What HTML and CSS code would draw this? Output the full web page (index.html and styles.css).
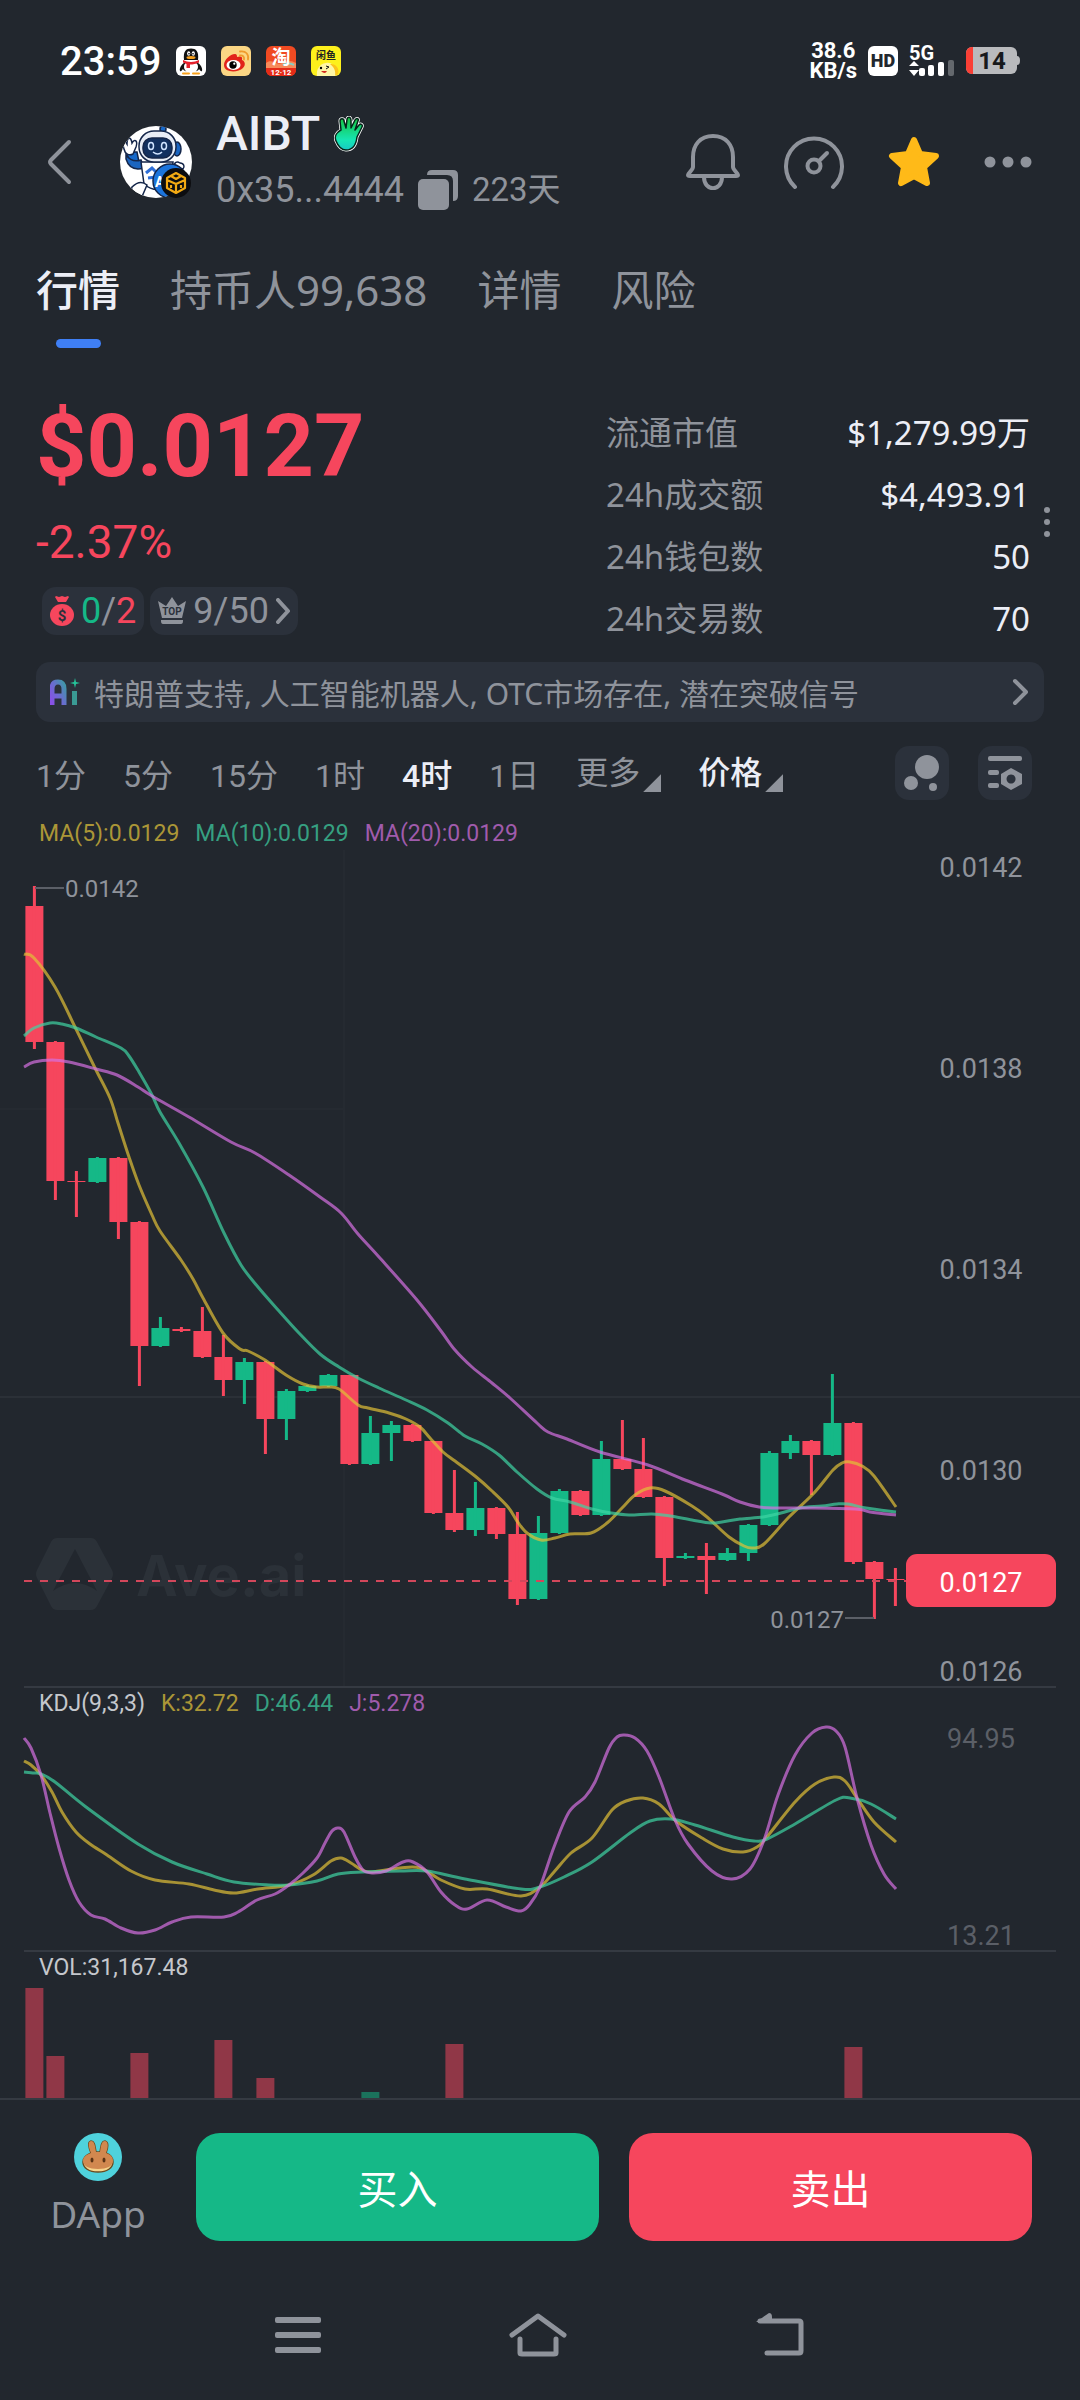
FILE: index.html
```html
<!DOCTYPE html>
<html lang="zh-CN">
<head>
    <meta charset="UTF-8">
    <meta name="viewport" content="width=device-width, initial-scale=1.0">
    <title>AIBT - Ave.ai</title>
    <link rel="stylesheet" href="styles.css">
</head>
<body>
    <div class="status-bar">
        <span class="clock">23:59</span>
        <div class="app-icons">
            <svg viewBox="0 0 30 30" aria-hidden="true">
                <rect width="30" height="30" rx="6" fill="#fff"/>
                <path d="M4 25c-1-3 2-7 4-8h14c2 1 5 5 4 8-1 1-2-1-3-2-1 4-15 4-16 0-1 1-2 3-3 2z" fill="#111"/>
                <ellipse cx="15" cy="21" rx="7" ry="6.500" fill="#fff"/>
                <path d="M8 14C7 5 10 2.500 15 2.500S23 5 22 14z" fill="#111"/>
                <ellipse cx="12.700" cy="7.500" rx="1.600" ry="2.200" fill="#fff"/><ellipse cx="17.300" cy="7.500" rx="1.600" ry="2.200" fill="#fff"/>
                <circle cx="13" cy="7.800" r=".8"/><circle cx="17" cy="7.800" r=".8"/>
                <ellipse cx="15" cy="11.500" rx="4.500" ry="1.500" fill="#f9a11b"/>
                <path d="M7 14c5 2.500 11 2.500 16 0v2.500c-3 1.500-6 2-9 2V22h-3.500v-4L7 16.500z" fill="#e4202c"/>
                <path d="M7 27.500h6M17 27.500h6" stroke="#f9a11b" stroke-width="2" stroke-linecap="round"/>
            </svg>
            <svg viewBox="0 0 30 30" aria-hidden="true">
                <rect width="30" height="30" rx="6" fill="#fbd684"/>
                <path d="M3 19c0-5 6-11 11-11 2 0 2 2 2 3 3-1 6-1 5 3 3 1 4 5 1 8-5 5-19 5-19-3z" fill="#e2231a"/>
                <ellipse cx="12.500" cy="19" rx="7" ry="5" fill="#fff"/>
                <circle cx="12" cy="19" r="3.700"/><circle cx="13.300" cy="17.700" r="1.100" fill="#fff"/>
                <path d="M19 9.500c3-.500 4.500 1.500 4 4M19 5.500c6-1 9 3 8 8" fill="none" stroke="#f09a2c" stroke-width="1.800" stroke-linecap="round"/>
            </svg>
            <svg viewBox="0 0 30 30" aria-hidden="true">
                <rect width="30" height="30" rx="6" fill="#f04a22"/>
                <path d="M0 17c6-5 10 3 16 0s10-2 14 0v5H0z" fill="#f78a5a"/>
                <path d="M17 19q6-3 11 0" stroke="#7fd0c8" stroke-width="2" fill="none"/>
                <text class="glyph" x="15" y="18" font-size="19" text-anchor="middle" fill="#fff">淘</text>
                <path d="M0 22h30v2a6 6 0 0 1-6 6H6a6 6 0 0 1-6-6z" fill="#e52b17"/>
                <text class="glyph" x="15" y="29" font-size="8" text-anchor="middle" fill="#fff">12·12</text>
            </svg>
            <svg viewBox="0 0 30 30" aria-hidden="true">
                <rect width="30" height="30" rx="6" fill="#fdf01c"/>
                <path d="M6 30c-1-6 2-12 9-13 5-1 7 2 11 4 1 3 1 6-1 9z" fill="#fff6a6"/>
                <path d="M19 18c6-1 10 5 8 10l-3 2c1-5-1-9-5-12z" fill="#fcc419"/>
                <text class="glyph" x="15" y="13" font-size="10" text-anchor="middle" fill="#222">闲鱼</text>
                <circle cx="10" cy="22" r="1.200"/><path d="M15 20l3 1-3 2" fill="none" stroke="#111"/>
                <path d="M10 25h6q-2 4-6 0z" fill="#d42a1c"/>
            </svg>
        </div>
        <div class="status-right">
            <span class="net-speed">38.6<br>KB/s</span>
            <span class="hd">HD</span>
            <svg class="signal" viewBox="0 0 46 32" aria-label="5G">
                <text class="glyph" x="0" y="15" font-size="20" fill="#fff">5G</text>
                <g fill="#fff">
                    <path d="M0 21l5-5 5 5zM0 25h10l-5 6z"/>
                    <rect x="10" y="23" width="6" height="8" rx="2"/>
                    <rect x="19" y="20" width="6" height="11" rx="2"/>
                    <rect x="29" y="17" width="6" height="14" rx="2"/>
                    <rect x="39" y="15" width="6" height="16" rx="2" opacity=".3"/>
                </g>
            </svg>
            <svg class="battery" viewBox="0 0 54 28" aria-label="14%">
                <rect x="0" y="0" width="51" height="27" rx="6" fill="#b9babd"/>
                <path d="M51 9q3 0 3 4.500T51 18z" fill="#b9babd"/>
                <path d="M7 0H6a6 6 0 0 0-6 6v15a6 6 0 0 0 6 6h1z" fill="#fa3f35"/>
                <text class="glyph" x="26" y="22" font-size="24" text-anchor="middle" fill="#17191c">14</text>
            </svg>
        </div>
    </div>

    <header class="token-header">
        <button class="icon-btn back" aria-label="返回">
            <svg width="26" height="46" viewBox="0 0 26 46"><path d="M23 3L5 21q-2 2 0 4l18 18" fill="none" stroke="currentColor" stroke-width="4" stroke-linecap="round"/></svg>
        </button>
        <svg class="avatar" viewBox="0 0 74 74" aria-hidden="true">
            <defs><clipPath id="avatar-clip"><circle cx="37" cy="37" r="36"/></clipPath></defs>
            <g clip-path="url(#avatar-clip)" stroke="#14264a" stroke-width="1.500">
                <rect width="74" height="74" fill="#fff" stroke="none"/>
                <circle cx="44" cy="4" r="3" fill="#1769c9"/>
                <path d="M7 27l5 12 8-2-2-10z" fill="#1769c9"/>
                <path d="M5 24c-2-7 0-10 3-5 0-7 4-8 5-1 3-5 6-2 4 4l-3 7c-4 2-8 0-9-5z" fill="#fff"/>
                <path d="M7 30q6 8 15 5l3 8q-14 4-18-9z" fill="#1b65c0"/>
                <path d="M22 37h32l-3 24q-15 8-26-2z" fill="#fff"/>
                <path d="M13 62q8-8 15-2l-6 14H10z" fill="#fff"/>
                <ellipse cx="58" cy="24" rx="4" ry="7" fill="#1b65c0"/>
                <rect x="20" y="6" width="37" height="31" rx="15" fill="#e8edf6"/>
                <rect x="24" y="13" width="29" height="20" rx="9" fill="#12305f"/>
                <g fill="none" stroke="#cfe3ff"><ellipse cx="32" cy="21" rx="2.500" ry="3.500"/><ellipse cx="45" cy="21" rx="2.500" ry="3.500"/><path d="M34 27q5 4 9 0"/></g>
                <path d="M27 48l6-5 6 6M29 53l8-1" fill="none" stroke="#2e6fd8" stroke-width="3"/>
                <path d="M55 42c0-5 3-6 6-4 4 0 5 4 3 6z" fill="#fff"/>
                <circle cx="51" cy="56" r="17" fill="#1c74dc"/>
            </g>
            <text class="glyph" x="36" y="62" font-size="14" fill="#fff">A</text>
            <circle cx="57" cy="58" r="15" fill="#0c0d10"/>
            <g fill="none" stroke="#f2a913" stroke-width="2.200" stroke-linejoin="round">
                <path d="M57 48l9 5v10l-9 5-9-5V53zM48 55l9 4 9-4M57 59v9M52 51l5 3 5-3M52 60v3M62 60v3"/>
            </g>
        </svg>
        <div class="token-id">
            <h1>AIBT
                <svg width="30" height="36" viewBox="0 0 30 36" aria-hidden="true">
                    <defs><linearGradient id="hand" x1="0" y1="0" x2="0" y2="1"><stop offset="0" stop-color="#16c23c"/><stop offset=".7" stop-color="#16e6b4"/><stop offset="1" stop-color="#18c9c4"/></linearGradient></defs>
                    <path d="M2 25c-2-5 1-9 5-11L6 5c0-3 4-3 4 0l2 7 1-9c1-3 4-2 4 1v8l4-8c2-3 4-1 3 1l-3 9 4-5c2-2 4 0 3 2l-5 10c-1 9-5 13-11 13-5 0-8-4-10-9z" fill="#fff" stroke="#fff" stroke-width="3" stroke-linejoin="round"/>
                    <path d="M2 25c-2-5 1-9 5-11L6 5c0-3 4-3 4 0l2 7 1-9c1-3 4-2 4 1v8l4-8c2-3 4-1 3 1l-3 9 4-5c2-2 4 0 3 2l-5 10c-1 9-5 13-11 13-5 0-8-4-10-9z" fill="url(#hand)" stroke="#06241a" stroke-width="1.500" stroke-linejoin="round"/>
                </svg>
            </h1>
            <p class="address">
                <span>0x35...4444</span>
                <button class="icon-btn" aria-label="复制地址">
                    <svg width="40" height="40" viewBox="0 0 40 40"><rect x="0" y="9" width="31" height="31" rx="5" fill="currentColor"/><path d="M9 5q0-5 5-5h21q5 0 5 5v21q0 5-5 5V11q0-6-6-6z" fill="currentColor"/></svg>
                </button>
                <span class="age">223天</span>
            </p>
        </div>
        <div class="header-actions">
            <button class="icon-btn" aria-label="提醒">
                <svg width="54" height="56" viewBox="0 0 54 56" fill="none" stroke="currentColor" stroke-width="4" stroke-linejoin="round"><path d="M27 2C14 2 7 11 7 23v10c0 3-5 6-5 8 0 1 1 1 2 1h46c1 0 2 0 2-1 0-2-5-5-5-8V23C47 11 40 2 27 2zM18 43c0 15 18 15 18 0"/></svg>
            </button>
            <button class="icon-btn" aria-label="速度">
                <svg width="60" height="56" viewBox="0 0 60 56" fill="none" stroke="currentColor" stroke-width="4" stroke-linecap="round"><path d="M11 53a28 28 0 1 1 38 0" /><circle cx="30" cy="32" r="6.500"/><path d="M35 27l8-8"/></svg>
            </button>
            <button class="icon-btn star" aria-label="收藏">
                <svg width="52" height="52" viewBox="0 0 52 52"><path d="M26 4l6 14 16 2-12 11 3 16-13-7-13 7 3-16L4 20l16-2z" fill="currentColor" stroke="currentColor" stroke-width="6" stroke-linejoin="round"/></svg>
            </button>
            <button class="icon-btn" aria-label="更多操作">
                <svg width="48" height="12" viewBox="0 0 48 12" fill="currentColor"><circle cx="6" cy="6" r="5.500"/><circle cx="24" cy="6" r="5.500"/><circle cx="42" cy="6" r="5.500"/></svg>
            </button>
        </div>
    </header>

    <nav class="tabs">
        <a href="#market" class="active">行情</a>
        <a href="#holders">持币人99,638</a>
        <a href="#detail">详情</a>
        <a href="#risk">风险</a>
    </nav>

    <main id="market">
        <section class="summary">
            <div class="quote">
                <p class="price">$0.0127</p>
                <p class="change">-2.37%</p>
                <div class="pills">
                    <button class="pill">
                        <svg width="24" height="32" viewBox="0 0 24 32" aria-hidden="true"><path d="M6 1l3 1 3-1 3 1 3-1 1 1-3 5H8L5 2z" fill="#f6465d"/><ellipse cx="12" cy="20" rx="12" ry="11" fill="#f6465d"/><text class="glyph" x="12" y="26" font-size="15" text-anchor="middle" fill="#2b313b">$</text></svg>
                        <span><b class="up">0</b>/<b class="down">2</b></span>
                    </button>
                    <button class="pill">
                        <svg width="28" height="28" viewBox="0 0 28 28" fill="currentColor" aria-hidden="true"><path d="M0 4l8 5 6-9 6 9 8-5-4 17H4zM3 23h22v1q0 3-2 3H5q-2 0-2-3z"/><text class="glyph" x="14" y="18" font-size="10" text-anchor="middle" fill="#2b313b">TOP</text></svg>
                        <span>9/50</span>
                        <svg width="14" height="26" viewBox="0 0 14 26" aria-hidden="true"><path d="M2 2l10 11L2 24" fill="none" stroke="currentColor" stroke-width="4" stroke-linecap="round" stroke-linejoin="round"/></svg>
                    </button>
                </div>
            </div>
            <dl class="stats">
                <div><dt>流通市值</dt><dd>$1,279.99万</dd></div>
                <div><dt>24h成交额</dt><dd>$4,493.91</dd></div>
                <div><dt>24h钱包数</dt><dd>50</dd></div>
                <div><dt>24h交易数</dt><dd>70</dd></div>
            </dl>
            <button class="icon-btn stats-more" aria-label="更多数据">
                <svg width="6" height="32" viewBox="0 0 6 32" fill="currentColor"><circle cx="3" cy="4" r="3"/><circle cx="3" cy="16" r="3"/><circle cx="3" cy="28" r="3"/></svg>
            </button>
        </section>

        <a href="#ai" class="ai-bar">
            <svg width="30" height="28" viewBox="0 0 30 28" aria-hidden="true">
                <defs><linearGradient id="ai" x1="0" x2="1" y1="1" y2="0"><stop offset="0" stop-color="#8a4fe8"/><stop offset=".5" stop-color="#6a6cd0"/><stop offset="1" stop-color="#3f97a8"/></linearGradient></defs>
                <path d="M2 27V11q0-7 6-7t6 7v16M3 18h10" fill="none" stroke="url(#ai)" stroke-width="5"/>
                <path d="M22 13h5v14h-5z" fill="#3a9a94"/><path d="M25 0l1 4 4 1-4 1-1 4-1-4-4-1 4-1z" fill="#25c49a"/>
            </svg>
            <span>特朗普支持, 人工智能机器人, OTC市场存在, 潜在突破信号</span>
            <svg width="16" height="28" viewBox="0 0 16 28" aria-hidden="true"><path d="M3 3l11 11L3 25" fill="none" stroke="currentColor" stroke-width="4" stroke-linecap="round" stroke-linejoin="round"/></svg>
        </a>

        <div class="toolbar">
            <button>1分</button>
            <button>5分</button>
            <button>15分</button>
            <button>1时</button>
            <button class="active">4时</button>
            <button>1日</button>
            <label class="dropdown"><select aria-label="更多周期"><option>更多</option><option>1周</option></select></label>
            <label class="dropdown active"><select aria-label="图表类型"><option>价格</option><option>市值</option></select></label>
            <button class="tool first" aria-label="气泡图">
                <svg width="36" height="38" viewBox="0 0 36 38" fill="currentColor"><circle cx="23" cy="13" r="12"/><circle cx="7" cy="29" r="7"/><circle cx="29" cy="33" r="4"/></svg>
            </button>
            <button class="tool" aria-label="图表设置">
                <svg width="34" height="34" viewBox="0 0 34 34" fill="currentColor"><rect width="34" height="5" rx="2"/><rect y="14" width="11" height="5" rx="2"/><rect y="27" width="11" height="5" rx="2"/><path fill-rule="evenodd" d="M23 12l11 6v10l-11 6-10-6V18zM23 18.500a4.500 4.500 0 1 0 .1 0z"/></svg>
            </button>
        </div>

        <section class="chart">
            <div class="legend">
                <span class="yellow">MA(5):0.0129</span>
                <span class="green">MA(10):0.0129</span>
                <span class="purple">MA(20):0.0129</span>
            </div>
            <svg id="price-chart" class="plot" viewBox="24 850 1032 836">
                <path class="grid" d="M0 1397H1080"/>
                <path class="grid faint" d="M0 1109H344M344 850V1686"/>
                <g class="watermark">
                    <path fill-rule="evenodd" d="M57 1538h34q4 0 6 4l15 28q2 4 0 8l-15 28q-2 4-6 4H57q-4 0-6-4l-14-28q-2-4 0-8l14-28q2-4 6-4zM75 1549l-22 42q22-16 44 0z"/>
                    <text x="136" y="1596">Ave.ai</text>
                </g>
                <g id="candles"></g>
                <path class="last-price" d="M24 1581H906"/>
                <g id="ma-lines"></g>
                <path class="pointer" d="M35 888H64M845 1618H874"/>
                <text class="marker" x="65" y="897">0.0142</text>
                <text class="marker" x="844" y="1628" text-anchor="end">0.0127</text>
                <g class="axis">
                    <text x="981" y="877">0.0142</text>
                    <text x="981" y="1078">0.0138</text>
                    <text x="981" y="1279">0.0134</text>
                    <text x="981" y="1480">0.0130</text>
                    <text x="981" y="1681">0.0126</text>
                </g>
                <g class="price-tag">
                    <rect x="906" y="1554" width="150" height="53" rx="11"/>
                    <text x="981" y="1592">0.0127</text>
                </g>
            </svg>
        </section>

        <section class="chart divided">
            <div class="legend">
                <span>KDJ(9,3,3)</span>
                <span class="yellow">K:32.72</span>
                <span class="green">D:46.44</span>
                <span class="purple">J:5.278</span>
            </div>
            <svg id="kdj-chart" class="plot" viewBox="24 1720 1032 230">
                <g id="kdj-lines"></g>
                <g class="axis dim">
                    <text x="981" y="1748">94.95</text>
                    <text x="981" y="1945">13.21</text>
                </g>
            </svg>
        </section>

        <section class="chart divided">
            <div class="legend"><span>VOL:31,167.48</span></div>
            <svg id="vol-chart" class="plot" viewBox="24 1984 1032 114"><g id="volume"></g></svg>
        </section>
    </main>

    <footer class="trade-bar">
        <a href="#dapp" class="dapp">
            <svg width="48" height="48" viewBox="0 0 48 48" aria-hidden="true">
                <circle cx="24" cy="24" r="24" fill="#4fd2dc"/>
                <path d="M17 20c-2-5-4-11 0-12 4 0 4 6 5 11h4c1-5 1-11 5-11 4 1 3 7 1 12 5 2 7 5 7 9 0 6-6 10-15 10S9 35 9 29c0-4 3-7 8-9z" fill="#f6d38a" stroke="#6b4a1e" stroke-width="1.500"/>
                <path d="M17 20c-2-5-4-11 0-12 4 0 4 6 5 11h4c1-5 1-11 5-11 4 1 3 7 1 12 5 2 7 4 7 8 0 5-6 8-15 8S9 33 9 28c0-4 3-6 8-8z" fill="#d1884f"/>
                <ellipse cx="18" cy="27" rx="1.500" ry="2.500" fill="#5a3314"/><ellipse cx="30" cy="27" rx="1.500" ry="2.500" fill="#5a3314"/>
            </svg>
            <span>DApp</span>
        </a>
        <button class="trade buy">买入</button>
        <button class="trade sell">卖出</button>
    </footer>

    <div class="system-nav">
        <button class="icon-btn" aria-label="最近任务">
            <svg width="46" height="46" viewBox="0 0 46 46" fill="currentColor"><rect y="5" width="46" height="6" rx="2"/><rect y="20" width="46" height="6" rx="2"/><rect y="35" width="46" height="6" rx="2"/></svg>
        </button>
        <button class="icon-btn" aria-label="主屏幕">
            <svg width="60" height="46" viewBox="0 0 60 46" fill="none" stroke="currentColor" stroke-width="5" stroke-linecap="round" stroke-linejoin="round"><path d="M4 23L30 4l26 19M12 27v14q0 1 2 1h32q2 0 2-1V27"/></svg>
        </button>
        <button class="icon-btn" aria-label="后退">
            <svg width="50" height="46" viewBox="0 0 50 46" fill="none" stroke="currentColor" stroke-width="5" stroke-linecap="round" stroke-linejoin="round"><path d="M12 41h32q2 0 2-2V11q0-2-2-2H5"/><path d="M1 10l13-9q3 0 3 4v5z" fill="currentColor" stroke="none"/></svg>
        </button>
    </div>

    <script src="chart.js"></script>
</body>
</html>
```
FILE: styles.css
```css
:root {
    --bg: #22272e;
    --panel: #2b313b;
    --line: #353a42;
    --text: #eceef6;
    --muted: #8f939b;
    --dim: #5b5f67;
    --up: #15b887;
    --down: #f6465d;
    --yellow: #ab9637;
    --green: #36a081;
    --purple: #a05bac;
    --blue: #3f7ff5;
}

* {
    box-sizing: border-box;
    margin: 0;
    padding: 0;
}

body {
    background: var(--bg);
    color: var(--muted);
    font-family: Roboto, "Noto Sans CJK SC", sans-serif;
    min-height: 100vh;
    display: flex;
    flex-direction: column;
}

svg {
    display: block;
    flex-shrink: 0;
}

a {
    color: inherit;
    text-decoration: none;
}

button, select {
    background: none;
    border: 0;
    color: inherit;
    font: inherit;
    cursor: pointer;
}

.glyph {
    font-weight: 700;
}

.icon-btn {
    display: block;
    color: var(--muted);
}

/* phone status bar */
.status-bar {
    display: flex;
    align-items: center;
    height: 106px;
    padding: 16px 60px 0;
    color: #fff;
}

.clock {
    font-size: 40px;
    font-weight: 500;
}

.app-icons {
    display: flex;
    gap: 15px;
    margin-left: 15px;
}

.app-icons svg {
    width: 30px;
    height: 30px;
}

.status-right {
    display: flex;
    align-items: center;
    gap: 11px;
    margin-left: auto;
}

.net-speed {
    font-size: 22px;
    line-height: 20px;
    font-weight: 700;
    text-align: center;
}

.hd {
    width: 30px;
    height: 30px;
    border-radius: 6px;
    background: #fff;
    color: var(--bg);
    font-size: 18px;
    line-height: 30px;
    font-weight: 900;
    text-align: center;
}

.signal {
    width: 46px;
    height: 32px;
    overflow: visible;
}

.battery {
    width: 54px;
    height: 28px;
}

/* token header */
.token-header {
    display: flex;
    align-items: center;
    padding: 0 48px 0 46px;
}

.avatar {
    width: 74px;
    height: 74px;
    margin: 0 23px 0 47px;
}

.token-id h1 {
    display: flex;
    align-items: center;
    gap: 14px;
    color: var(--text);
    font-size: 48px;
    line-height: 56px;
    font-weight: 500;
}

.address {
    display: flex;
    align-items: center;
    gap: 14px;
    font-size: 36px;
    line-height: 56px;
}

.age {
    font-size: 33px;
}

.header-actions {
    display: flex;
    align-items: center;
    gap: 44px;
    margin-left: auto;
}

.star {
    color: #ffba18;
}

.tabs {
    display: flex;
    gap: 50px;
    padding: 40px 36px 0;
    font-family: "Noto Sans", "Noto Sans CJK SC", sans-serif;
    font-size: 42px;
    line-height: 64px;
}

.tabs .active {
    color: var(--text);
    font-weight: 500;
}

.tabs .active::after {
    content: "";
    display: block;
    width: 45px;
    height: 9px;
    margin: 17px auto 0;
    border-radius: 5px;
    background: var(--blue);
}

/* price and 24h figures */
.summary {
    display: flex;
    padding: 46px 30px 0 36px;
}

.quote {
    flex: 1;
}

.price {
    color: var(--down);
    font-size: 88px;
    line-height: 104px;
    font-weight: 700;
}

.change {
    margin-top: 16px;
    color: var(--down);
    font-size: 46px;
    line-height: 56px;
}

.pills {
    display: flex;
    gap: 6px;
    margin: 17px 0 0 6px;
}

.pill {
    display: flex;
    align-items: center;
    gap: 7px;
    height: 48px;
    padding: 0 8px;
    border-radius: 14px;
    background: var(--panel);
    font-size: 36px;
}

.pill b {
    font-weight: 400;
}

.up {
    color: var(--up);
}

.down {
    color: var(--down);
}

.stats {
    width: 424px;
    padding-top: 8px;
    font-family: "Noto Sans", "Noto Sans CJK SC", sans-serif;
    font-size: 33px;
    line-height: 62px;
}

.stats div {
    display: flex;
    justify-content: space-between;
}

.stats dd {
    color: var(--text);
}

.stats-more {
    margin-left: 14px;
}

.ai-bar {
    display: flex;
    align-items: center;
    gap: 14px;
    height: 60px;
    margin: 12px 36px 0;
    padding: 0 16px 0 14px;
    border-radius: 14px;
    background: var(--panel);
    font-family: "Noto Sans", "Noto Sans CJK SC", sans-serif;
    font-size: 30px;
}

.ai-bar span {
    flex: 1;
}

.toolbar {
    display: flex;
    align-items: center;
    gap: 37px;
    height: 54px;
    margin: 24px 48px 0 36px;
    font-size: 32px;
}

.toolbar .active {
    color: var(--text);
    font-weight: 500;
}

.dropdown {
    display: flex;
    align-items: center;
    gap: 2px;
}

.dropdown select {
    appearance: none;
    outline: 0;
}

.dropdown::after {
    content: "";
    align-self: flex-end;
    width: 18px;
    height: 18px;
    background: var(--muted);
    clip-path: polygon(100% 0, 100% 100%, 0 100%);
}

.tool {
    display: flex;
    align-items: center;
    justify-content: center;
    width: 54px;
    height: 54px;
    border-radius: 14px;
    background: var(--panel);
}

.tool.first {
    margin: 0 -8px 0 auto;
}

/* charts */
.chart {
    margin: 0 24px;
}

.toolbar + .chart {
    margin-top: 18px;
}

.divided {
    border-top: 2px solid var(--line);
}

.legend {
    display: flex;
    gap: 16px;
    padding-left: 15px;
    color: #c5c7cc;
    font-size: 23px;
    line-height: 32px;
}

.yellow { color: var(--yellow); }
.green { color: var(--green); }
.purple { color: var(--purple); }

.plot {
    width: 100%;
    height: auto;
    overflow: visible;
}

.plot path {
    fill: none;
}

.plot .grid {
    stroke: #2b3037;
    stroke-width: 2;
}

.plot .faint {
    stroke: #252a31;
}

.watermark text,
.plot .watermark path {
    fill: #2b3138;
}

.watermark text {
    font: 700 56px Inter, sans-serif;
}

.candle-up { fill: var(--up); }
.candle-down { fill: var(--down); }

.volume-bar {
    opacity: .52;
}

.line {
    stroke-width: 3;
    opacity: .7;
}

.line.yellow { stroke: #e1c038; }
.line.green { stroke: #3fd4a4; }
.line.purple { stroke: #d671e2; }

.last-price {
    stroke: #d2475b;
    stroke-width: 2;
    stroke-dasharray: 8 8;
}

.pointer {
    stroke: var(--dim);
    stroke-width: 2;
}

.marker {
    fill: var(--muted);
    font-size: 24px;
}

.axis text, .price-tag text {
    fill: var(--muted);
    font-size: 27px;
    text-anchor: middle;
}

.axis.dim text {
    fill: var(--dim);
}

.price-tag rect {
    fill: var(--down);
}

.price-tag text {
    fill: #fff;
}

/* bottom bars */
.trade-bar {
    display: flex;
    gap: 30px;
    padding: 33px 48px 0;
    border-top: 2px solid var(--line);
}

.dapp {
    display: flex;
    flex-direction: column;
    align-items: center;
    gap: 6px;
    width: 100px;
    margin-right: 18px;
    font-family: "Noto Sans", sans-serif;
    font-size: 37px;
    line-height: 54px;
}

.trade {
    flex: 1;
    height: 108px;
    border-radius: 24px;
    color: #fff;
    font-size: 40px;
}

.buy { background: var(--up); }
.sell { background: var(--down); }

.system-nav {
    display: flex;
    justify-content: center;
    gap: 187px;
    padding: 71px 0 40px;
}
```
FILE: chart.js
```js
// [direction, body top, body bottom, wick top, wick bottom]
const candles = [
    ['down', 906, 1042, 886, 1049], ['down', 1042, 1181, 1041, 1200],
    ['down', 1181, 1182, 1171, 1217], ['up', 1158, 1182, 1157, 1183],
    ['down', 1158, 1222, 1157, 1239], ['down', 1222, 1346, 1221, 1386],
    ['up', 1328, 1346, 1317, 1347], ['down', 1329, 1331, 1327, 1332],
    ['down', 1331, 1357, 1307, 1358], ['down', 1357, 1380, 1335, 1396],
    ['up', 1362, 1380, 1358, 1404], ['down', 1362, 1419, 1361, 1454],
    ['up', 1391, 1419, 1389, 1440], ['up', 1386, 1391, 1385, 1392],
    ['up', 1375, 1386, 1374, 1387], ['down', 1375, 1464, 1375, 1465],
    ['up', 1433, 1464, 1416, 1465], ['up', 1425, 1433, 1421, 1461],
    ['down', 1425, 1441, 1424, 1442], ['down', 1441, 1513, 1441, 1514],
    ['down', 1513, 1530, 1470, 1532], ['up', 1508, 1530, 1482, 1536],
    ['down', 1508, 1534, 1507, 1539], ['down', 1534, 1599, 1512, 1605],
    ['up', 1533, 1599, 1516, 1600], ['up', 1491, 1533, 1489, 1534],
    ['down', 1491, 1515, 1490, 1516], ['up', 1459, 1515, 1441, 1516],
    ['down', 1459, 1469, 1420, 1470], ['down', 1469, 1497, 1438, 1498],
    ['down', 1497, 1558, 1496, 1586], ['up', 1556, 1558, 1553, 1559],
    ['down', 1556, 1560, 1543, 1594], ['up', 1553, 1560, 1548, 1561],
    ['up', 1525, 1553, 1524, 1561], ['up', 1453, 1525, 1451, 1526],
    ['up', 1441, 1453, 1435, 1459], ['down', 1441, 1455, 1440, 1495],
    ['up', 1423, 1455, 1374, 1456], ['down', 1423, 1562, 1422, 1564],
    ['down', 1562, 1579, 1561, 1619], ['down', 1579, 1580, 1568, 1606]
];

// candle index -> top of the volume bar
const volume = { 0: 1988, 1: 2056, 5: 2053, 9: 2040, 11: 2078, 16: 2092, 20: 2044, 39: 2047 };
const volumeBase = 2098;

const ma = {
    yellow: '24,954 34,958 55,987 76,1029 95,1068 110,1098 118,1123 129,1157 139,1185 152,1215 160,1231 181,1260 193,1279 203,1298 223,1333 240,1349 248,1351 265,1360 286,1375 303,1384 317,1387 328,1387 339,1389 358,1405 368,1408 389,1413 406,1419 420,1427 430,1438 443,1452 455,1461 475,1476 492,1491 508,1507 517,1521 527,1533 541,1540 555,1538 570,1534 591,1533 607,1523 622,1508 635,1495 650,1488 665,1491 692,1506 707,1517 729,1537 744,1546 753,1548 764,1544 789,1517 814,1493 833,1470 842,1463 850,1462 862,1466 874,1476 896,1507',
    green: '24,1036 34,1028 50,1023 62,1024 76,1028 96,1037 121,1048 129,1056 139,1072 152,1095 160,1112 179,1143 203,1187 224,1233 241,1265 258,1287 279,1311 298,1332 320,1354 339,1367 358,1378 379,1388 406,1400 427,1410 448,1423 465,1436 482,1444 499,1455 517,1472 537,1489 552,1498 570,1502 592,1509 611,1513 629,1515 652,1514 670,1516 692,1520 711,1523 722,1522 740,1519 763,1517 781,1513 800,1508 822,1506 837,1504 848,1504 866,1508 896,1512',
    purple: '24,1067 34,1062 52,1060 69,1062 96,1069 117,1075 138,1087 152,1096 189,1117 231,1142 255,1153 289,1175 320,1197 341,1213 358,1234 379,1257 417,1300 441,1331 455,1350 472,1367 492,1383 510,1398 537,1423 548,1432 567,1439 600,1452 648,1465 685,1480 722,1494 740,1502 759,1507 777,1508 803,1508 855,1509 870,1512 896,1515'
};

const kdj = {
    yellow: '24,1761 31,1765 41,1775 52,1792 62,1812 76,1832 90,1844 107,1855 131,1871 155,1880 189,1884 214,1890 234,1893 258,1889 289,1885 313,1875 331,1861 341,1858 351,1863 362,1870 372,1872 400,1868 420,1868 441,1880 465,1889 487,1889 521,1896 540,1887 554,1872 571,1853 592,1838 612,1810 626,1801 643,1798 659,1804 676,1821 702,1838 723,1849 743,1852 757,1847 766,1838 795,1802 815,1784 834,1777 845,1781 857,1798 874,1822 896,1842',
    green: '24,1772 34,1773 41,1774 55,1782 86,1807 138,1844 172,1862 207,1874 234,1882 269,1885 289,1885 317,1881 338,1874 362,1872 400,1871 427,1871 465,1879 521,1889 540,1887 564,1877 592,1862 630,1833 650,1821 671,1819 695,1825 733,1837 754,1841 767,1839 795,1824 836,1800 850,1798 871,1804 896,1819',
    purple: '24,1738 31,1748 41,1775 50,1813 59,1848 69,1880 79,1902 91,1915 105,1919 121,1928 138,1933 155,1930 172,1922 191,1917 224,1917 238,1912 257,1900 275,1894 289,1885 303,1873 317,1858 325,1843 332,1831 338,1828 344,1832 355,1857 363,1870 372,1873 386,1871 403,1862 413,1862 427,1872 441,1892 455,1905 467,1909 487,1900 506,1907 521,1911 530,1904 540,1887 554,1847 569,1812 585,1797 595,1782 609,1748 617,1737 624,1735 635,1738 647,1751 659,1777 675,1820 688,1844 712,1871 732,1879 750,1869 764,1840 778,1795 795,1755 812,1733 826,1727 836,1731 845,1747 857,1798 871,1845 884,1874 896,1889'
};

const candleX = i => 34.4 + i * 21;

function add(parent, tag, attrs) {
    const el = document.createElementNS('http://www.w3.org/2000/svg', tag);
    for (const key in attrs) el.setAttribute(key, attrs[key]);
    document.getElementById(parent).appendChild(el);
}

// Smooth curve through all points
function smoothPath(text) {
    const p = text.split(' ').map(pair => pair.split(',').map(Number));
    let d = `M${p[0]}`;
    for (let i = 0; i < p.length - 1; i++) {
        const a = p[i - 1] || p[i], b = p[i], c = p[i + 1], e = p[i + 2] || c;
        d += `C${b[0] + (c[0] - a[0]) / 6},${b[1] + (c[1] - a[1]) / 6}`
           + ` ${c[0] - (e[0] - b[0]) / 6},${c[1] - (e[1] - b[1]) / 6} ${c}`;
    }
    return d;
}

candles.forEach(([dir, top, bottom, high, low], i) => {
    add('candles', 'rect', { class: `candle-${dir}`, x: candleX(i) - 9, y: top, width: 18, height: bottom - top });
    add('candles', 'rect', { class: `candle-${dir}`, x: candleX(i) - 1.5, y: high, width: 3, height: low - high });
});

for (const i in volume) {
    add('volume', 'rect', { class: `volume-bar candle-${candles[i][0]}`, x: candleX(i) - 9, y: volume[i], width: 18, height: volumeBase - volume[i] });
}

for (const color in ma) add('ma-lines', 'path', { class: `line ${color}`, d: smoothPath(ma[color]) });
for (const color in kdj) add('kdj-lines', 'path', { class: `line ${color}`, d: smoothPath(kdj[color]) });
```
